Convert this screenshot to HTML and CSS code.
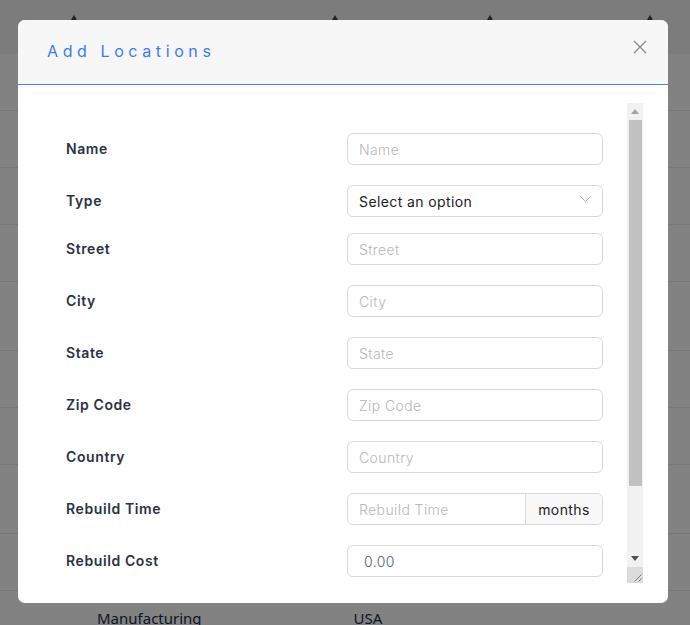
FILE: index.html
```html
<!DOCTYPE html>
<html lang="en">
<head>
<meta charset="utf-8">
<title>Add Locations</title>
<link rel="stylesheet" href="styles.css">
</head>
<body>
<div class="page">
  <div class="thead">
    <span class="sort s1"></span>
    <span class="sort s2"></span>
    <span class="sort s3"></span>
    <span class="sort s4"></span>
  </div>
  <div class="trow"></div>
  <div class="trow"></div>
  <div class="trow"></div>
  <div class="trow"></div>
  <div class="trow tall"></div>
  <div class="trow"></div>
  <div class="trow"></div>
  <div class="trow tall"></div>
  <div class="trow"></div>
  <div class="trow last"><span class="cell c1">Manufacturing</span><span class="cell c2">USA</span></div>
</div>
<div class="backdrop"></div>
<div class="modal">
  <div class="modal-header">
    <h2 class="modal-title">Add Locations</h2>
    <button class="close" type="button" aria-label="Close">
      <svg width="14" height="14" viewBox="0 0 14 14"><path d="M1 1 L13 13 M13 1 L1 13" stroke="#8a8a8a" stroke-width="1.4" fill="none"/></svg>
    </button>
  </div>
  <div class="modal-body">
    <div class="scroll-wrap">
      <div class="scroll">
        <div class="form">
          <div class="row"><label class="label">Name</label><input class="field" placeholder="Name"></div>
          <div class="row row-select"><label class="label">Type</label>
            <div class="select">Select an option
              <svg class="chev" width="11" height="7" viewBox="0 0 11 7"><path d="M0.5 0.5 L5.5 5.5 L10.5 0.5" stroke="#b5b5b5" stroke-width="1" fill="none"/></svg>
            </div>
          </div>
          <div class="row"><label class="label">Street</label><input class="field" placeholder="Street"></div>
          <div class="row"><label class="label">City</label><input class="field" placeholder="City"></div>
          <div class="row"><label class="label">State</label><input class="field" placeholder="State"></div>
          <div class="row"><label class="label">Zip Code</label><input class="field" placeholder="Zip Code"></div>
          <div class="row"><label class="label">Country</label><input class="field" placeholder="Country"></div>
          <div class="row"><label class="label">Rebuild Time</label>
            <div class="group"><input class="field grouped" placeholder="Rebuild Time"><span class="addon">months</span></div>
          </div>
          <div class="row"><label class="label">Rebuild Cost</label><input class="field cost" value="0.00"></div>
        </div>
      </div>
      <div class="vbar" aria-hidden="true">
        <div class="sb-btn">
          <svg width="8" height="5" viewBox="0 0 8 5"><path d="M0 5 L4 0 L8 5 Z" fill="#a3a3a3"/></svg>
        </div>
        <div class="sb-track"><div class="sb-thumb"></div></div>
        <div class="sb-btn">
          <svg width="8" height="5" viewBox="0 0 8 5"><path d="M0 0 L8 0 L4 5 Z" fill="#505050"/></svg>
        </div>
        <div class="sb-resizer">
          <svg width="16" height="16" viewBox="0 0 16 16"><path d="M14.5 7.5 L7.5 14.5 M14.5 11.5 L11.5 14.5" stroke="#7a7a7a" stroke-width="1" fill="none"/></svg>
        </div>
      </div>
    </div>
  </div>
</div>
</body>
</html>
```
FILE: styles.css
```css
* { box-sizing: border-box; }
html, body { margin: 0; padding: 0; }
body {
  width: 690px;
  height: 625px;
  overflow: hidden;
  font-family: "Inter", "Liberation Sans", sans-serif;
  background: #ffffff;
}
.page { width: 690px; }
.thead {
  height: 54px;
  background: #f3f3f6;
  position: relative;
}
.sort {
  position: absolute;
  top: 15px;
  width: 0; height: 0;
  border-left: 3px solid transparent;
  border-right: 3px solid transparent;
  border-bottom: 5px solid #444;
}
.s1 { left: 71px; }
.s2 { left: 332px; }
.s3 { left: 487px; }
.s4 { left: 647px; }
.trow {
  height: 57px;
  border-bottom: 1px solid #e9e9e9;
  display: flex;
  align-items: flex-end;
}
.trow.tall { height: 69px; }
.trow.last { height: 60px; border-bottom: 0; align-items: flex-start; padding-top: 17px; }
.cell { font-size: 15px; color: #1e2a4c; font-family: "Noto Sans", sans-serif; }
.c1 { margin-left: 97px; }
.c2 { margin-left: 152px; }
.backdrop {
  position: fixed;
  inset: 0;
  background: rgba(0, 0, 0, 0.49);
}
.modal {
  position: fixed;
  top: 20px;
  left: 18px;
  width: 650px;
  height: 583px;
  background: #fff;
  border-radius: 7px;
  overflow: hidden;
  display: flex;
  flex-direction: column;
}
.modal-header {
  height: 65px;
  background: #f7f7f7;
  border-bottom: 1px solid #4a86f2;
  display: flex;
  align-items: flex-start;
  justify-content: space-between;
  padding: 0 21px 0 29px;
}
.modal-title {
  margin: 21px 0 0;
  font-size: 16px;
  font-weight: 400;
  letter-spacing: 4.6px;
  color: #3d7bf0;
  font-family: "Inter", sans-serif;
}
.close {
  margin-top: 20px;
  border: 0;
  background: none;
  padding: 0;
  width: 14px;
  height: 14px;
  cursor: pointer;
}
.close svg { display: block; }
.modal-body {
  flex: 1;
  padding: 18px 25px 20px;
}
.scroll-wrap {
  height: 480px;
  display: flex;
}
.scroll {
  flex: 1;
  overflow: hidden;
}
.vbar {
  width: 16px;
  display: flex;
  flex-direction: column;
  background: #f1f1f1;
}
.sb-btn {
  height: 17px;
  display: flex;
  align-items: center;
  justify-content: center;
}
.sb-btn svg { display: block; }
.sb-track {
  flex: 1;
  padding: 0 1px 0 2px;
}
.sb-thumb {
  height: 366px;
  background: #c1c1c1;
}
.sb-resizer {
  height: 16px;
  background: #dcdcdc;
}
.sb-resizer svg { display: block; }
.form {
  padding: 30px 0 80px 23px;
  display: flex;
  flex-direction: column;
  gap: 20px;
}
.row {
  display: flex;
  align-items: center;
  height: 32px;
}
.row-select { margin-bottom: -4px; }
.label {
  width: 281px;
  font-size: 14px;
  font-weight: 600;
  color: #2b3245;
  letter-spacing: 0.6px;
  padding-bottom: 2px;
}
.field, .select, .group {
  width: 256px;
  height: 32px;
  border: 1px solid #d9d9d9;
  border-radius: 6px;
  font-family: "Inter", sans-serif;
  font-size: 14px;
  font-weight: 300;
  letter-spacing: 0.4px;
  color: #222;
  padding: 0 11px;
  background: #fff;
  outline: none;
}
.field::placeholder { color: #b8b8b8; font-weight: 300; }
.select {
  display: flex;
  align-items: center;
  justify-content: space-between;
  font-weight: 400;
  color: #222;
  padding-right: 11px;
}
.chev { display: block; margin-bottom: 3px; }
.group {
  display: flex;
  padding: 0;
  overflow: hidden;
}
.field.grouped {
  border: 0;
  border-radius: 0;
  width: 177px;
  height: 30px;
}
.addon {
  flex: 1;
  background: #f8f8f8;
  border-left: 1px solid #d9d9d9;
  display: flex;
  align-items: center;
  justify-content: center;
  font-size: 14px;
  font-weight: 400;
  letter-spacing: 0.4px;
  color: #222;
}
.field.cost { padding-left: 16px; color: #555c6a; }
```
